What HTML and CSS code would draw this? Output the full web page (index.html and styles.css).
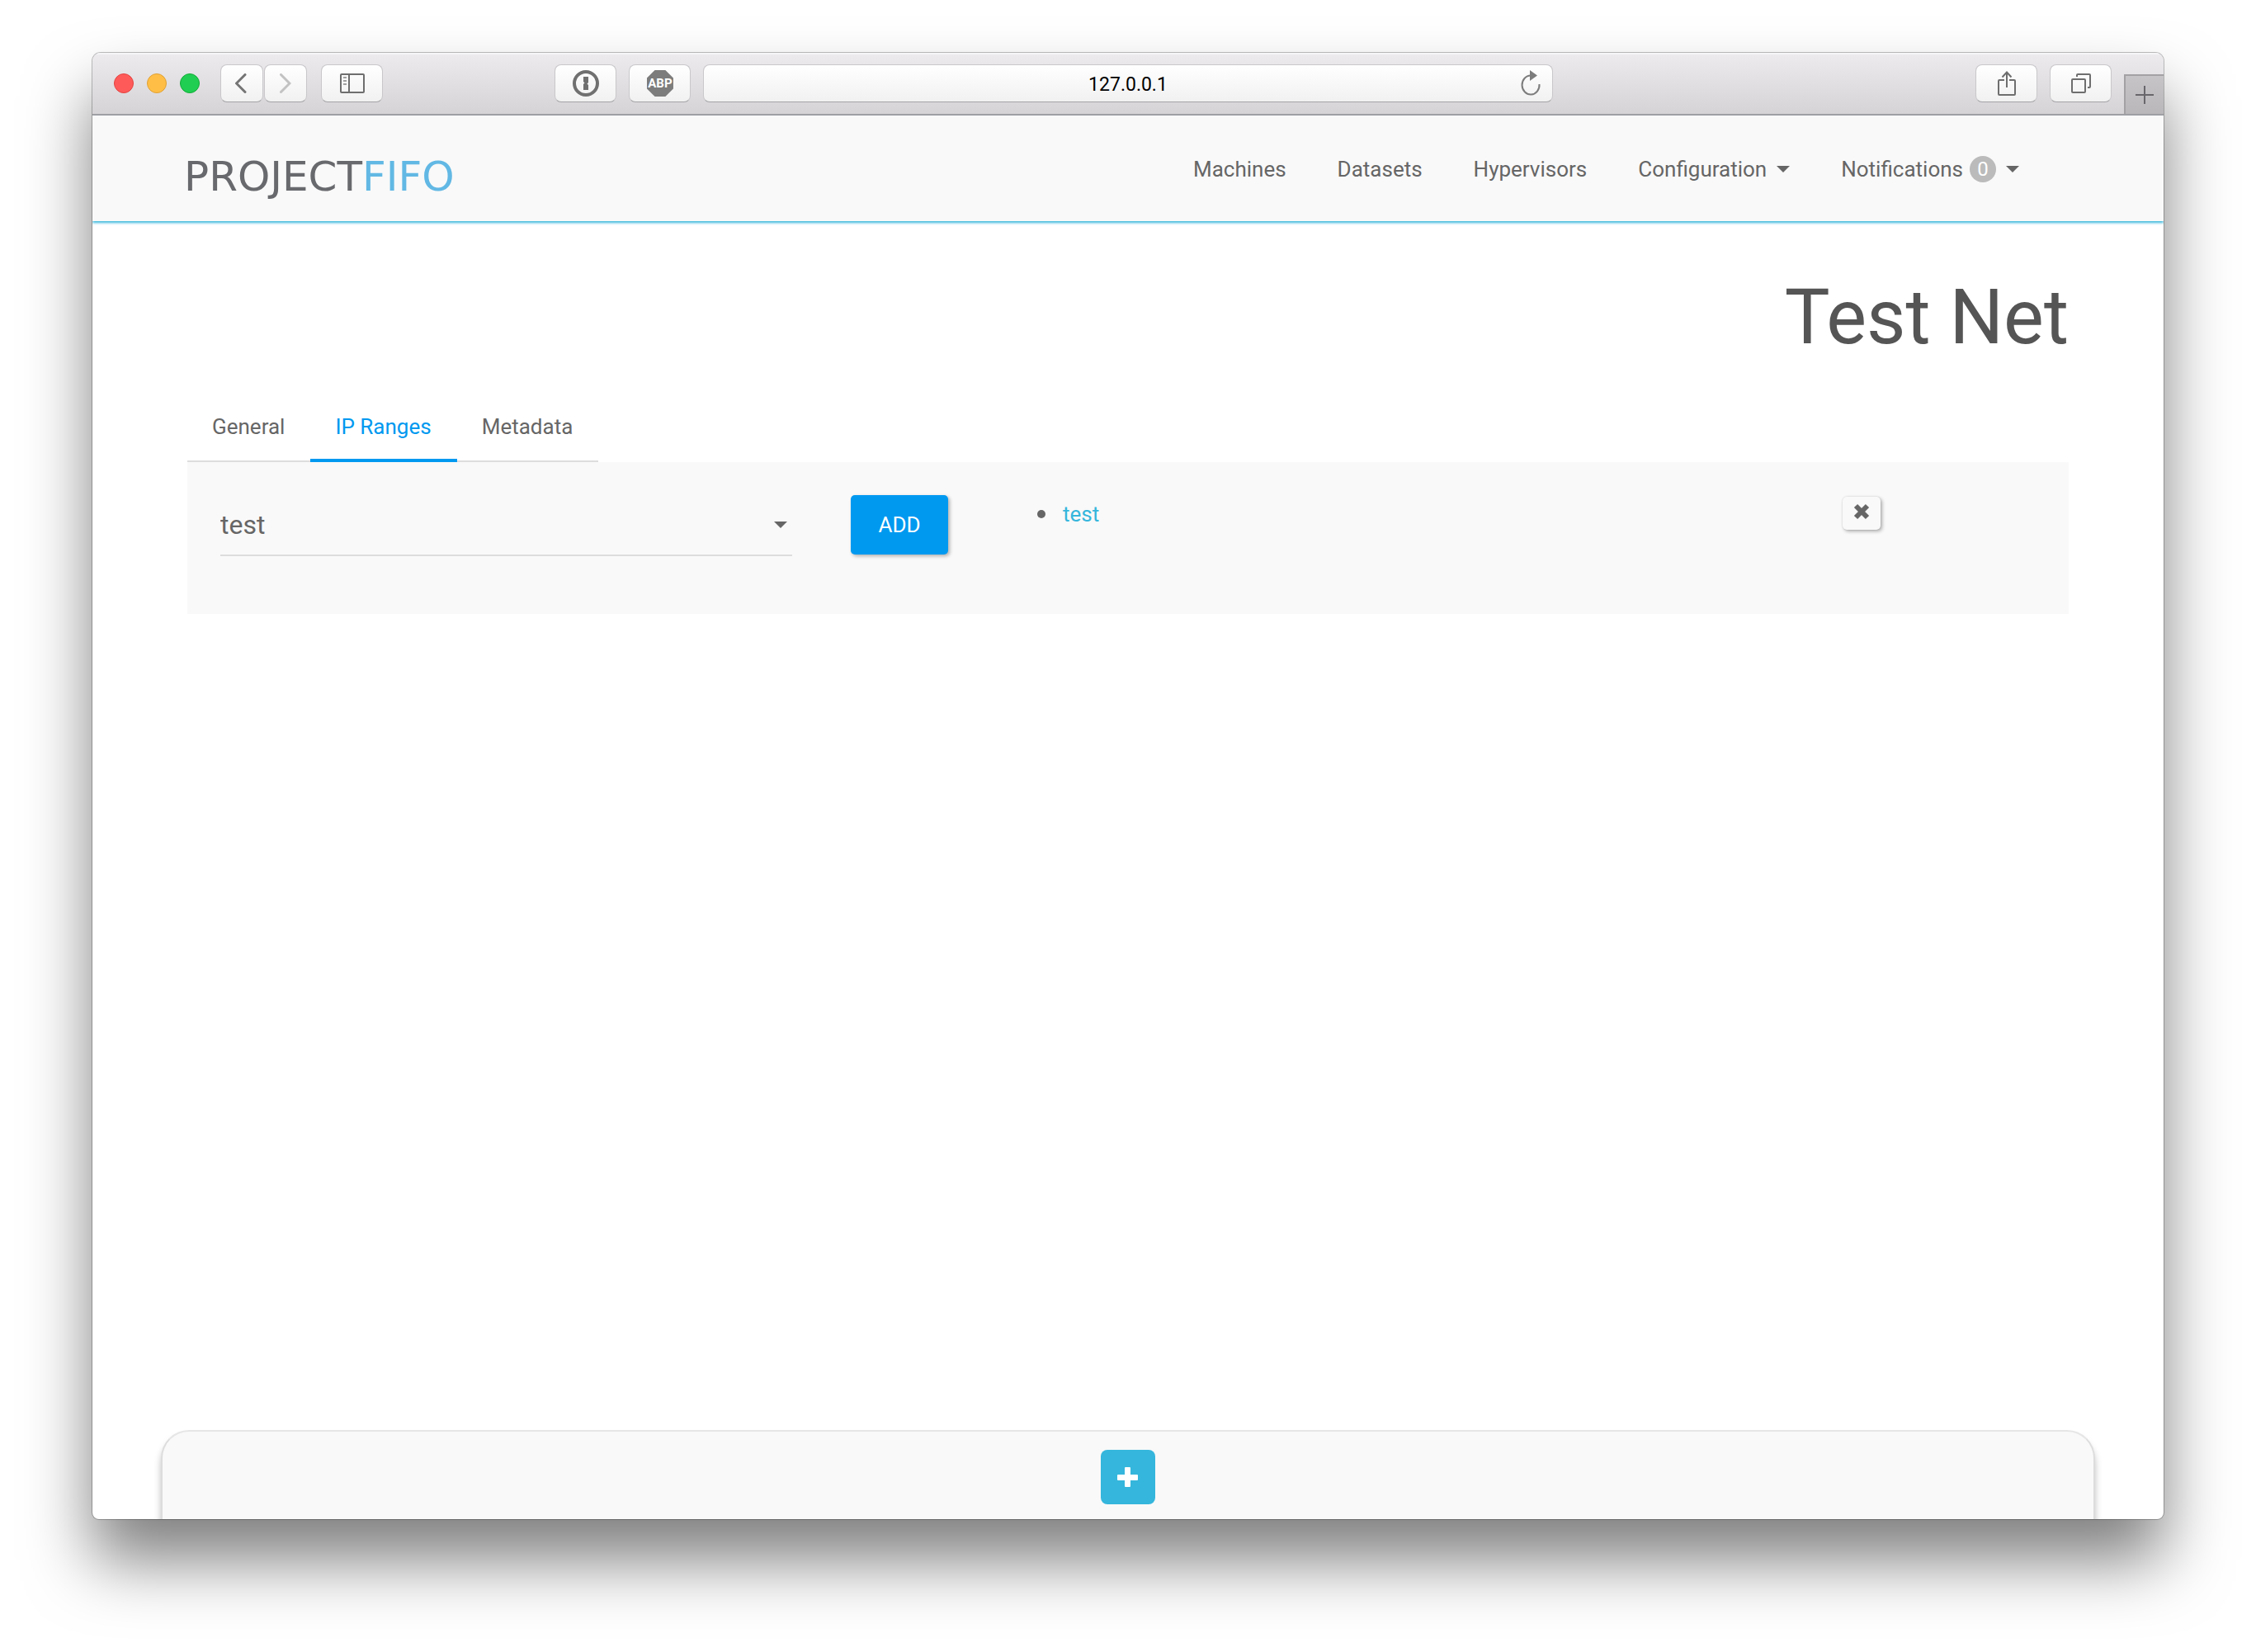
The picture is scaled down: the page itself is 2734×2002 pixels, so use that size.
FILE: index.html
```html
<!DOCTYPE html>
<html lang="en">
  <head>
    <meta charset="UTF-8">
    <meta name="viewport" content="width=device-width, initial-scale=1.0">
    <title>Test Net</title>
    <link rel="stylesheet" href="styles.css">
  </head>
  <body>
    <div class="window">
      <div class="toolbar">
        <div class="toolbar-start">
          <div class="lights">
            <span class="light light-close"></span>
            <span class="light light-minimize"></span>
            <span class="light light-zoom"></span>
          </div>
          <div class="history">
            <button class="tool tool-small" type="button" aria-label="Back">
              <svg viewBox="0 0 16 24" width="16" height="24" aria-hidden="true">
                <path d="M12 1.500 1.500 12 12 22.500" fill="none" stroke="#747474" stroke-width="3" stroke-linecap="round"/>
              </svg>
            </button>
            <button class="tool tool-small" type="button" aria-label="Forward">
              <svg viewBox="0 0 14 24" width="14" height="24" aria-hidden="true">
                <path d="M1.500 1.500 12 12 1.500 22.500" fill="none" stroke="#c2c2c2" stroke-width="3" stroke-linecap="round"/>
              </svg>
            </button>
          </div>
          <button class="tool" type="button" aria-label="Sidebar">
            <svg viewBox="0 0 30 24" width="30" height="24" aria-hidden="true">
              <g fill="none" stroke="#6e6e6e" stroke-width="2">
                <rect x="1" y="1" width="28" height="22" rx="1"/>
                <path d="M11 1v22"/>
                <path d="M4 5h4M4 9h4M4 13h4" stroke="#a0a0a0"/>
              </g>
            </svg>
          </button>
          <div class="extensions">
            <button class="tool" type="button" aria-label="Password manager">
              <svg viewBox="0 0 32 32" width="32" height="32" aria-hidden="true">
                <circle cx="16" cy="16" r="14" fill="none" stroke="#707070" stroke-width="4"/>
                <path d="M13 8h6v7l-1.500 1.500L19 18v6h-6v-7l1.500-1.500L13 14z" fill="#707070"/>
              </svg>
            </button>
            <button class="tool" type="button" aria-label="Adblock Plus">
              <span class="abp">ABP</span>
            </button>
          </div>
        </div>
        <div class="address">
          <input class="address-input" type="text" value="127.0.0.1" aria-label="Address">
          <button class="reload" type="button" aria-label="Reload">
            <svg viewBox="0 0 24 32" width="24" height="32" aria-hidden="true">
              <path d="M12 6.500a10.500 11.500 0 1 0 10.500 10.500" fill="none" stroke="#7c7c7c" stroke-width="2"/>
              <path d="M11 0l9 6.500-9 6.500z" fill="#7c7c7c"/>
            </svg>
          </button>
        </div>
        <div class="toolbar-end">
          <button class="tool" type="button" aria-label="Share">
            <svg viewBox="0 0 22 30" width="22" height="30" aria-hidden="true">
              <g fill="none" stroke="#6e6e6e" stroke-width="2">
                <path d="M8 11H2a1 1 0 0 0-1 1v16a1 1 0 0 0 1 1h18a1 1 0 0 0 1-1V12a1 1 0 0 0-1-1h-6"/>
                <path d="M11 20V2M5.500 7.500 11 1.500l5.500 6"/>
              </g>
            </svg>
          </button>
          <button class="tool" type="button" aria-label="Show all tabs">
            <svg viewBox="0 0 24 24" width="24" height="24" aria-hidden="true">
              <g fill="none" stroke="#6e6e6e" stroke-width="2">
                <rect x="1" y="7" width="16" height="16" rx="1"/>
                <path d="M7 4V2a1 1 0 0 1 1-1h14a1 1 0 0 1 1 1v14a1 1 0 0 1-1 1h-2"/>
              </g>
            </svg>
          </button>
          <button class="new-tab" type="button" aria-label="New tab">
            <svg viewBox="0 0 22 22" width="22" height="22" aria-hidden="true">
              <path d="M11 0v22M0 11h22" stroke="#68666a" stroke-width="2"/>
            </svg>
          </button>
        </div>
      </div>

      <header class="header">
        <a class="logo" href="#">PROJECT<span class="logo-accent">FIFO</span></a>
        <nav class="nav">
          <a href="#">Machines</a>
          <a href="#">Datasets</a>
          <a href="#">Hypervisors</a>
          <a href="#">Configuration <span class="caret"></span></a>
          <a href="#">Notifications <span class="badge">0</span> <span class="caret"></span></a>
        </nav>
      </header>

      <main class="main">
        <h1 class="title">Test Net</h1>
        <nav class="tabs">
          <a class="tab" href="#">General</a>
          <a class="tab tab-active" href="#" aria-current="page">IP Ranges</a>
          <a class="tab" href="#">Metadata</a>
        </nav>
        <section class="panel">
          <div class="select">
            <select aria-label="IP range">
              <option>test</option>
            </select>
            <span class="caret"></span>
          </div>
          <button class="add" type="button">ADD</button>
          <ul class="ranges">
            <li><a href="#">test</a></li>
          </ul>
          <button class="remove" type="button" aria-label="Remove test">
            <svg viewBox="0 0 20 20" width="20" height="20" aria-hidden="true">
              <path d="M3 3l14 14M17 3 3 17" stroke="#666" stroke-width="6"/>
            </svg>
          </button>
        </section>
      </main>

      <footer class="footer">
        <button class="create" type="button" aria-label="Create">
          <svg viewBox="0 0 26 24" width="26" height="24" aria-hidden="true">
            <rect x="9" y="0" width="7" height="24" rx="1" fill="#fff"/>
            <rect x="0" y="9" width="25" height="7" rx="1" fill="#fff"/>
          </svg>
        </button>
      </footer>
    </div>
  </body>
</html>
```
FILE: styles.css
```css
*,
*::after,
*::before {
  box-sizing: border-box;
}

body {
  display: flex;
  min-height: 100vh;
  margin: 0;
  padding: 64px 112px 161px;
  background: #fff;
  color: #666;
  font-family: Roboto, sans-serif;
  font-size: 26px;
  line-height: 30px;
}

button,
input,
select {
  margin: 0;
  padding: 0;
  border: 0;
  background: none;
  color: inherit;
  font: inherit;
}

a {
  color: inherit;
  text-decoration: none;
}

svg {
  display: block;
}

.window {
  display: flex;
  flex: 1;
  flex-direction: column;
  min-width: 0;
  overflow: hidden;
  border-radius: 10px 10px 8px 8px;
  background: #fff;
  box-shadow: 0 0 0 1px rgba(0, 0, 0, 0.25), 0 50px 80px rgba(0, 0, 0, 0.5);
}

/* Browser toolbar */
.toolbar {
  display: grid;
  grid-template-columns: 1fr 41% 1fr;
  align-items: center;
  height: 76px;
  border-bottom: 2px solid #a19fa3;
  background: linear-gradient(#edebee, #d5d3d6);
  box-shadow: inset 0 2px #f5f4f6;
}

.toolbar-start,
.toolbar-end,
.extensions {
  display: flex;
  align-items: center;
  gap: 15px;
}

.toolbar-start {
  padding: 0 15px 0 26px;
}

.toolbar-end {
  align-self: stretch;
  justify-content: flex-end;
}

.lights {
  display: flex;
  gap: 16px;
}

.light {
  width: 24px;
  height: 24px;
  border: 1px solid;
  border-radius: 50%;
}

.light-close {
  border-color: #e2433f;
  background: #ff5a5a;
}

.light-minimize {
  border-color: #e0a033;
  background: #ffbf47;
}

.light-zoom {
  border-color: #12ac36;
  background: #20ce52;
}

.history {
  display: flex;
  gap: 1px;
  margin: 0 2px 0 10px;
}

.extensions {
  margin-left: auto;
}

.tool,
.address {
  height: 46px;
  border: 1px solid #c9c7ca;
  border-bottom-color: #a3a2a5;
  border-radius: 8px;
  background: linear-gradient(#fff, #f1f1f1);
}

.tool {
  display: flex;
  align-items: center;
  justify-content: center;
  width: 75px;
}

.tool-small {
  width: 52px;
}

.abp {
  width: 32px;
  clip-path: polygon(30% 0, 70% 0, 100% 30%, 100% 70%, 70% 100%, 30% 100%, 0 70%, 0 30%);
  background: #7c7c7c;
  color: #fff;
  font-size: 15px;
  font-weight: 700;
  line-height: 32px;
}

.address {
  display: flex;
  align-items: center;
  padding-left: 50px;
}

.address-input {
  flex: 1;
  min-width: 0;
  padding-top: 4px;
  color: #000;
  font-size: 23px;
  text-align: center;
}

.reload {
  display: flex;
  width: 50px;
  padding-left: 12px;
}

.new-tab {
  display: flex;
  align-items: center;
  align-self: flex-end;
  justify-content: center;
  width: 48px;
  height: 48px;
  border: solid #a3a1a4;
  border-width: 2px 0 0 2px;
  background: linear-gradient(#c6c4c7, #b9b7ba);
}

/* Site header */
.header {
  display: flex;
  align-items: flex-start;
  justify-content: space-between;
  height: 128px;
  padding: 49px 175px 0 111px;
  background: #f9f9f9;
  box-shadow: 0 2px 3px #35b6dc;
}

.logo {
  color: #68696d;
  font-family: "DejaVu Sans", sans-serif;
  font-size: 50px;
  line-height: 50px;
}

.logo-accent {
  color: #62b8e4;
}

.nav {
  display: flex;
  gap: 62px;
}

.nav a {
  display: flex;
  align-items: center;
}

.caret {
  border: solid transparent;
  border-width: 8px 8px 0;
  border-top-color: #666;
}

.nav .caret {
  margin-left: 12px;
}

.badge {
  width: 32px;
  height: 32px;
  margin-left: 8px;
  border-radius: 50%;
  background: #bbb;
  color: #fff;
  font-size: 24px;
  line-height: 32px;
  text-align: center;
}

/* Content */
.main {
  flex: 1;
  padding: 67px 115px;
}

.title {
  margin: 0 0 41px;
  color: #555;
  font-size: 92px;
  font-weight: 400;
  line-height: 100px;
  text-align: right;
}

.tabs {
  display: flex;
}

.tab {
  padding: 26px 31px 28px 30px;
  box-shadow: inset 0 -2px #ddd;
}

.tab-active {
  color: #0099f0;
  box-shadow: inset 0 -4px #0099f0;
}

.panel {
  display: flex;
  align-items: flex-start;
  padding: 40px 40px 70px;
  background: #f9f9f9;
}

.select {
  display: grid;
  flex: 0 0 693px;
  align-items: center;
  height: 74px;
  border-bottom: 2px solid #ddd;
}

.select select,
.select .caret {
  grid-area: 1 / 1;
}

.select select {
  height: 72px;
  appearance: none;
  font-size: 32px;
}

.select .caret {
  justify-self: end;
  margin-right: 6px;
  pointer-events: none;
}

.add {
  width: 118px;
  height: 72px;
  margin-left: 71px;
  border-radius: 5px;
  background: #0099f0;
  box-shadow: 2px 2px 4px rgba(0, 0, 0, 0.3);
  color: #fff;
}

.ranges {
  flex: 1;
  margin: 8px 0 0 108px;
  padding: 0;
  list-style: none;
}

.ranges li {
  display: flex;
  align-items: center;
  gap: 21px;
}

.ranges li::before {
  width: 10px;
  height: 10px;
  border-radius: 50%;
  background: #666;
  content: "";
}

.ranges a {
  color: #35b6dc;
}

.remove {
  display: flex;
  align-items: flex-start;
  justify-content: center;
  width: 46px;
  height: 40px;
  margin: 2px 188px 0 0;
  padding-top: 8px;
  border-radius: 5px;
  box-shadow: 2px 2px 4px rgba(0, 0, 0, 0.3), 0 0 2px rgba(0, 0, 0, 0.15);
}

/* Bottom drawer */
.footer {
  display: flex;
  justify-content: center;
  height: 108px;
  margin: 0 83px;
  padding-top: 22px;
  border: 2px solid #ddd;
  border-top-color: #e6e6e6;
  border-bottom: 0;
  border-radius: 34px 34px 0 0;
  background: #f9f9f9;
  box-shadow: 0 8px 8px rgba(0, 0, 0, 0.25);
}

.create {
  display: flex;
  align-items: center;
  justify-content: center;
  width: 66px;
  height: 66px;
  border-radius: 8px;
  background: #35b6dc;
}
```
